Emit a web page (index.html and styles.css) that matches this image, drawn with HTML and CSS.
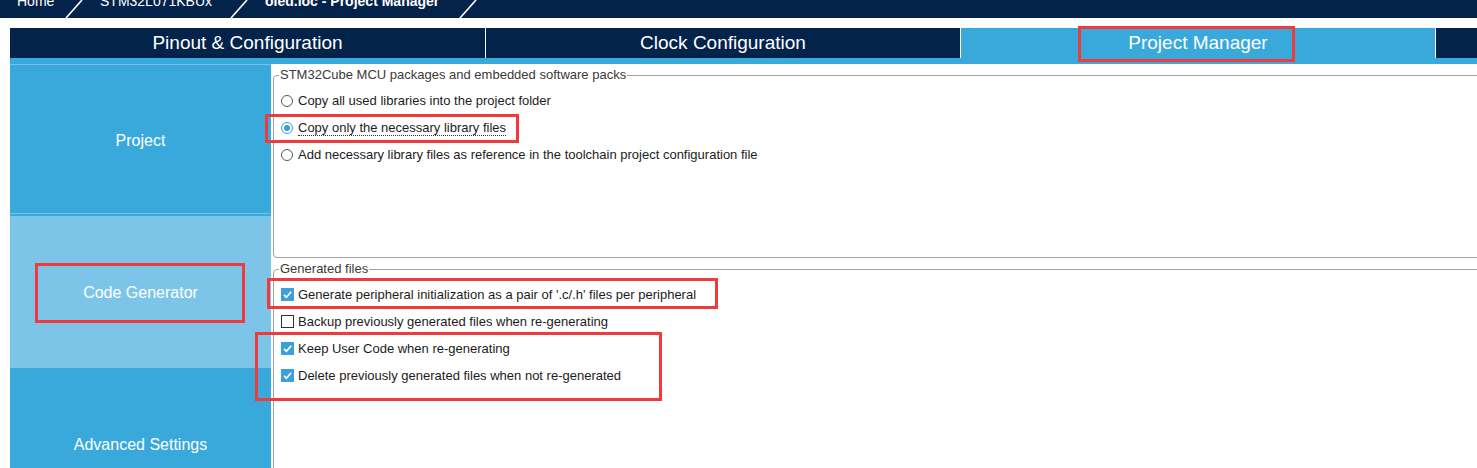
FILE: index.html
```html
<!DOCTYPE html>
<html>
<head>
<meta charset="utf-8">
<title>Project Manager</title>
<link rel="stylesheet" href="styles.css">
</head>
<body>
<div class="topbar">
  <div class="crumb first"><span>Home</span></div>
  <svg class="sep" width="18" height="18" viewBox="0 0 18 18"><path d="M1 18 L17 0" stroke="#fff" stroke-width="1.6" fill="none"/></svg>
  <div class="crumb second"><span>STM32L071KBUx</span></div>
  <svg class="sep" width="18" height="18" viewBox="0 0 18 18"><path d="M1 18 L17 0" stroke="#fff" stroke-width="1.6" fill="none"/></svg>
  <div class="crumb third"><span class="bold">oled.ioc - Project Manager</span></div>
  <svg class="sep" width="18" height="18" viewBox="0 0 18 18"><path d="M1 18 L17 0" stroke="#fff" stroke-width="1.6" fill="none"/></svg>
</div>

<div class="app">
  <div class="tabs">
    <div class="tab t1">Pinout &amp; Configuration</div>
    <div class="tab t2">Clock Configuration</div>
    <div class="tab t3 active">Project Manager</div>
    <div class="tab t4"></div>
  </div>
  <div class="strip"></div>
  <div class="main">
    <div class="sidebar">
      <div class="side-item project">Project</div>
      <div class="side-item codegen">Code Generator</div>
      <div class="side-item advanced">Advanced Settings</div>
    </div>
    <div class="content">
      <fieldset class="group packs">
        <legend>STM32Cube MCU packages and embedded software packs</legend>
        <div class="options">
          <div class="row"><span class="radio"></span><span class="label">Copy all used libraries into the project folder</span></div>
          <div class="row"><span class="radio on"></span><span class="label focus">Copy only the necessary library files</span></div>
          <div class="row"><span class="radio"></span><span class="label">Add necessary library files as reference in the toolchain project configuration file</span></div>
        </div>
      </fieldset>
      <fieldset class="group files">
        <legend>Generated files</legend>
        <div class="options">
          <div class="row"><svg class="check" width="13" height="13" viewBox="0 0 13 13"><rect width="13" height="13" fill="#3b9fd9"/><path d="M3 6.8 L5.4 9.2 L10.2 3.8" stroke="#fff" stroke-width="1.7" fill="none"/></svg><span class="label">Generate peripheral initialization as a pair of '.c/.h' files per peripheral</span></div>
          <div class="row"><span class="box"></span><span class="label">Backup previously generated files when re-generating</span></div>
          <div class="row"><svg class="check" width="13" height="13" viewBox="0 0 13 13"><rect width="13" height="13" fill="#3b9fd9"/><path d="M3 6.8 L5.4 9.2 L10.2 3.8" stroke="#fff" stroke-width="1.7" fill="none"/></svg><span class="label">Keep User Code when re-generating</span></div>
          <div class="row"><svg class="check" width="13" height="13" viewBox="0 0 13 13"><rect width="13" height="13" fill="#3b9fd9"/><path d="M3 6.8 L5.4 9.2 L10.2 3.8" stroke="#fff" stroke-width="1.7" fill="none"/></svg><span class="label">Delete previously generated files when not re-generated</span></div>
        </div>
      </fieldset>
    </div>
  </div>
</div>

<div class="mark m-tab"></div>
<div class="mark m-radio"></div>
<div class="mark m-codegen"></div>
<div class="mark m-generate"></div>
<div class="mark m-keep"></div>
</body>
</html>
```

FILE: styles.css
```css
html, body {
  margin: 0;
  padding: 0;
}
body {
  width: 1477px;
  height: 468px;
  overflow: hidden;
  background: #fff;
  font-family: "Liberation Sans", Arial, sans-serif;
  position: relative;
}

/* breadcrumb bar */
.topbar {
  height: 18px;
  background: #03234b;
  display: flex;
  overflow: hidden;
}
.crumb {
  box-sizing: border-box;
  padding-left: 17px;
  color: #fff;
  font-size: 14px;
  line-height: 14px;
  margin-top: -6px;
  white-space: nowrap;
}
.crumb.first { width: 65px; }
.crumb.second { width: 147px; }
.crumb.third { width: 211px; }
.crumb .bold { font-weight: bold; }
.sep { flex: 0 0 18px; display: block; }

/* tabs */
.app {
  padding-left: 10px;
  margin-top: 10px;
}
.tabs {
  display: flex;
  height: 30px;
}
.tab {
  box-sizing: border-box;
  background: #03234b;
  color: #fff;
  font-size: 19px;
  display: flex;
  align-items: center;
  justify-content: center;
  border-right: 1px solid #fff;
}
.tab.t1 { flex: 0 0 476px; }
.tab.t2 { flex: 0 0 475px; }
.tab.t3 { flex: 0 0 475px; }
.tab.t4 { flex: 1; border-right: none; }
.tab.active { background: #39a9dc; }
.strip {
  height: 6px;
  background: #39a9dc;
}

/* main */
.main {
  display: flex;
  height: 404px;
}
.sidebar {
  flex: 0 0 261px;
  background: #39a9dc;
  display: flex;
  flex-direction: column;
}
.side-item {
  box-sizing: border-box;
  color: #fff;
  font-size: 16px;
  display: flex;
  align-items: center;
  justify-content: center;
  height: 152px;
  padding-top: 2px;
  flex: 0 0 auto;
}
.side-item.project {
  height: 150px;
  padding-top: 4px;
  border-top: 1px solid #74c2e8;
  border-bottom: 1px solid #74c2e8;
  margin-bottom: 2px;
}
.side-item.codegen {
  background: #7cc5e9;
}
.content {
  flex: 1;
  overflow: hidden;
  padding-left: 2px;
}

.group {
  box-sizing: border-box;
  margin: 4px 0 0 0;
  padding: 0 0 0 5px;
  border: 1px solid #a0a0a0;
  border-radius: 4px;
  width: calc(100% + 40px);
  min-width: 0;
}
.group.packs { height: 190px; }
.group.files { height: 300px; }
.group legend {
  padding: 0 1px;
  font-size: 13px;
  line-height: 14px;
  color: #3a3a3a;
}
.options {
  padding-top: 5px;
}
.row {
  height: 27px;
  display: flex;
  align-items: center;
  margin-left: 2px;
  font-size: 13px;
  color: #1c1c1c;
}
.label {
  margin-left: 5px;
  white-space: nowrap;
}
.label.focus {
  border-bottom: 1px dotted #333;
  line-height: 14px;
  margin-top: 2px;
}
.radio {
  box-sizing: border-box;
  width: 12px;
  height: 12px;
  border: 1px solid #555;
  border-radius: 50%;
  background: #fff;
  display: flex;
  align-items: center;
  justify-content: center;
}
.radio.on {
  border-color: #3b9fd9;
}
.radio.on::after {
  content: "";
  width: 6px;
  height: 6px;
  border-radius: 50%;
  background: #3b9fd9;
}
.check {
  display: block;
  flex: 0 0 13px;
  margin-right: -1px;
}
.box {
  box-sizing: border-box;
  width: 13px;
  height: 13px;
  border: 1px solid #333;
  background: #fff;
  margin-right: -1px;
}

/* red annotation frames */
.mark {
  position: absolute;
  box-sizing: border-box;
  border: 3px solid #ef3b3b;
}
.m-tab { left: 1078px; top: 26px; width: 217px; height: 36px; }
.m-radio { left: 265px; top: 114px; width: 254px; height: 29px; }
.m-codegen { left: 35px; top: 263px; width: 210px; height: 60px; }
.m-generate { left: 267px; top: 278px; width: 451px; height: 31px; }
.m-keep { left: 255px; top: 332px; width: 407px; height: 69px; }
```
